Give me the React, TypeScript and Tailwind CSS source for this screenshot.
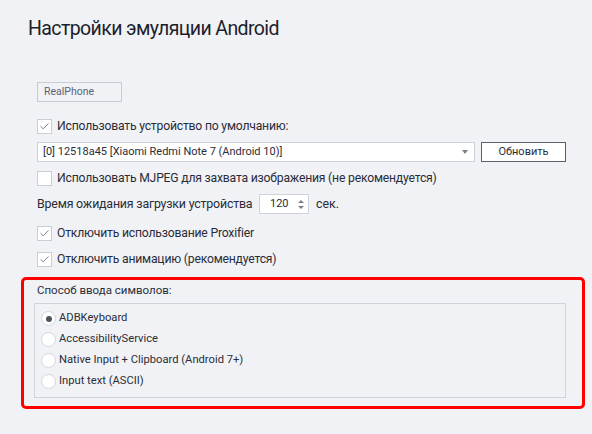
import { Check } from 'lucide-react';

const font = "font-['Roboto','Noto_Sans',sans-serif]";

function CheckBox({ checked }: { checked?: boolean }) {
  return (
    <span className="w-[15px] h-[15px] shrink-0 border border-[#c9cdd6] bg-white flex items-center justify-center">
      {checked && <Check size={11} strokeWidth={1.6} className="text-[#4d525e]" />}
    </span>
  );
}

function CheckRow({ checked, label, className = '' }: { checked?: boolean; label: string; className?: string }) {
  return (
    <div className={`flex items-center gap-[5px] h-[15px] ${className}`}>
      <CheckBox checked={checked} />
      <span className="text-[12.2px] tracking-[-0.2px] text-[#2a2d38] whitespace-nowrap">{label}</span>
    </div>
  );
}

function Radio({ selected, label }: { selected?: boolean; label: string }) {
  return (
    <div className="flex items-center gap-[3px] h-[21px] pl-[6px]">
      <span className="w-[15px] h-[15px] rounded-full border border-[#d3d6dd] bg-white flex items-center justify-center">
        {selected && <span className="w-[6px] h-[6px] rounded-full bg-[#4f535c]" />}
      </span>
      <span className="text-[11.2px] text-[#2a2d38] whitespace-nowrap">{label}</span>
    </div>
  );
}

export default function App() {
  return (
    <div className={`w-[592px] h-[434px] bg-[#f1f2f6] overflow-hidden ${font}`}>
      <h1 className="pt-[14px] pl-[28px] text-[19.5px] tracking-[-0.6px] leading-[30px] text-[#1c1f2b]">
        Настройки эмуляции Android
      </h1>

      <div className="pl-[37px]">
        <div className="mt-[38px] w-[85px] h-[20px] border border-[#c8ccd5] flex items-center pl-[6px] text-[10.5px] text-[#5d6275]">
          RealPhone
        </div>

        <CheckRow checked label="Использовать устройство по умолчанию:" className="mt-[17px]" />

        <div className="mt-[8px] flex items-center gap-[6px]">
          <div className="w-[438px] h-[20px] bg-white border border-[#ced2da] flex items-center justify-between pl-[5px] pr-[6px]">
            <span className="text-[11px] text-[#2a2d38] whitespace-nowrap">
              [0] 12518a45 [Xiaomi Redmi Note 7 (Android 10)]
            </span>
            <span className="w-0 h-0 border-l-[3.5px] border-r-[3.5px] border-t-[4px] border-l-transparent border-r-transparent border-t-[#7a7f8a]" />
          </div>
          <div className="w-[85px] h-[20px] bg-white border border-[#5d6068] flex items-center justify-center text-[11px] text-[#2a2d38]">
            Обновить
          </div>
        </div>

        <CheckRow label="Использовать MJPEG для захвата изображения (не рекомендуется)" className="mt-[9px]" />

        <div className="mt-[8px] flex items-center h-[20px]">
          <span className="w-[222px] text-[12.4px] tracking-[-0.2px] text-[#2a2d38] whitespace-nowrap">Время ожидания загрузки устройства</span>
          <div className="w-[50px] h-[20px] bg-white border border-[#ced2da] flex items-center pl-[10px] pr-[4px]">
            <span className="text-[11px] text-[#2a2d38]">120</span>
            <span className="ml-auto flex flex-col items-center gap-[3px]">
              <span className="w-0 h-0 border-l-[3px] border-r-[3px] border-b-[3px] border-l-transparent border-r-transparent border-b-[#7a7f8a]" />
              <span className="w-0 h-0 border-l-[3px] border-r-[3px] border-t-[3px] border-l-transparent border-r-transparent border-t-[#7a7f8a]" />
            </span>
          </div>
          <span className="ml-[7px] text-[12.4px] text-[#2a2d38]">сек.</span>
        </div>

        <CheckRow checked label="Отключить использование Proxifier" className="mt-[12px]" />
        <CheckRow checked label="Отключить анимацию (рекомендуется)" className="mt-[11px]" />
      </div>

      <div className="mt-[10px] ml-[21px] w-[564px] h-[132px] border-[3px] border-[#ff0000] rounded-[5px]">
        <div className="pl-[13px] pt-[2px] h-[20px] flex items-center text-[11.5px] text-[#2a2d38]">
          Способ ввода символов:
        </div>
        <div className="mt-[3px] ml-[10px] w-[532px] h-[95px] border border-[#d0d3da] pt-[4px]">
          <Radio selected label="ADBKeyboard" />
          <Radio label="AccessibilityService" />
          <Radio label="Native Input + Clipboard (Android 7+)" />
          <Radio label="Input text (ASCII)" />
        </div>
      </div>
    </div>
  );
}
